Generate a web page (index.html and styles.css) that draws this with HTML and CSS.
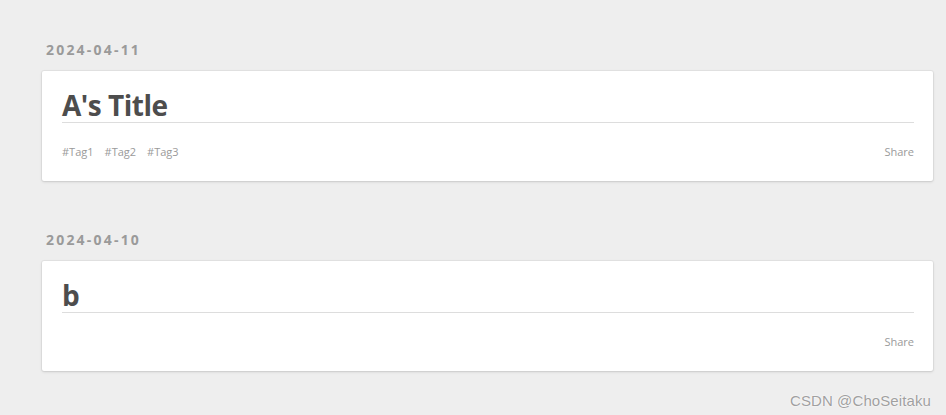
FILE: index.html
```html
<!DOCTYPE html>
<html>
<head>
<meta charset="utf-8">
<link rel="stylesheet" href="styles.css">
</head>
<body>
<main class="list">
  <section class="post">
    <div class="date">2024-04-11</div>
    <article class="card">
      <h2 class="title">A's Title</h2>
      <div class="meta">
        <div class="tags"><span>#Tag1</span><span>#Tag2</span><span>#Tag3</span></div>
        <span class="share">Share</span>
      </div>
    </article>
  </section>
  <section class="post">
    <div class="date">2024-04-10</div>
    <article class="card">
      <h2 class="title">b</h2>
      <div class="meta">
        <div class="tags"></div>
        <span class="share">Share</span>
      </div>
    </article>
  </section>
</main>
<div class="watermark">CSDN @ChoSeitaku</div>
</body>
</html>
```
FILE: styles.css
```css
html, body {
  margin: 0;
  padding: 0;
  background: #eeeeee;
  height: 100%;
}
body {
  font-family: "Open Sans", "Noto Sans", sans-serif;
  position: relative;
  overflow: hidden;
}
.list {
  padding: 40px 13px 0 42px;
}
.post {
  margin-bottom: 49px;
}
.date {
  padding-left: 4px;
  font-size: 14px;
  line-height: 20px;
  font-weight: 700;
  letter-spacing: 2.2px;
  color: #9a9a9a;
  margin-bottom: 11px;
}
.card {
  background: #ffffff;
  border-radius: 2px;
  box-shadow: 0 1px 3px rgba(0, 0, 0, 0.13), 0 0 0 1px rgba(0, 0, 0, 0.04);
  padding: 18px 19px 21px 20px;
}
.title {
  margin: 0;
  font-size: 28px;
  line-height: 33px;
  font-weight: 700;
  letter-spacing: -0.5px;
  color: #4d4d4d;
  border-bottom: 1px solid #dddddd;
}
.meta {
  display: flex;
  justify-content: space-between;
  align-items: center;
  margin-top: 21px;
  font-size: 11px;
  line-height: 16px;
  color: #9a9a9a;
}
.tags {
  display: flex;
  gap: 11px;
}
.watermark {
  position: absolute;
  right: 15px;
  bottom: 6px;
  font-family: "Liberation Sans", Arial, sans-serif;
  font-size: 15px;
  letter-spacing: 0.1px;
  color: #a0a0a0;
  text-shadow: 0 0 2px #ffffff, 0 0 1px #ffffff;
}
```
